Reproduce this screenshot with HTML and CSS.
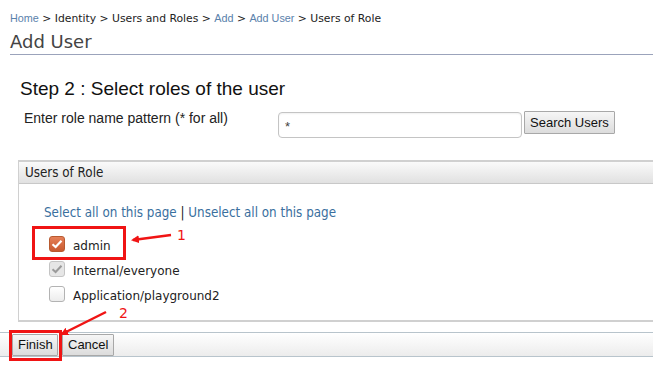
FILE: index.html
```html
<!DOCTYPE html>
<html lang="en">
<head>
  <meta charset="UTF-8" />
  <title>Add User</title>
  <link rel="stylesheet" href="styles.css">
</head>
<body>
  <div class="breadcrumb">
    <a href="#">Home</a> &gt; Identity &gt; Users and Roles &gt; <a href="#">Add</a> &gt; <a href="#">Add User</a> &gt; Users of Role
  </div>
  <h2 class="page-title">Add User</h2>

  <div class="content">
    <h3 class="step-title">Step 2 : Select roles of the user</h3>

    <div class="search-row">
      <label class="search-label">Enter role name pattern (* for all)</label>
      <input type="text" class="search-input" value="*" />
      <button class="btn search-btn">Search Users</button>
    </div>

    <div class="panel">
      <div class="panel-head">Users of Role</div>
      <div class="panel-body">
        <div class="select-links">
          <a href="#">Select all on this page</a> | <a href="#">Unselect all on this page</a>
        </div>
        <div class="role-list">
          <div class="role-item role-admin">
            <span class="box checked">
              <svg width="12" height="10" viewBox="0 0 12 10"><path d="M1.5 5.2 L4.6 8 L10.5 1.8" fill="none" stroke="#fff" stroke-width="2.2"/></svg>
            </span>
            <span class="role-name">admin</span>
          </div>
          <div class="role-item">
            <span class="box disabled">
              <svg width="12" height="10" viewBox="0 0 12 10"><path d="M1.5 5.2 L4.6 8 L10.5 1.8" fill="none" stroke="#9a9a9a" stroke-width="2"/></svg>
            </span>
            <span class="role-name">Internal/everyone</span>
          </div>
          <div class="role-item">
            <span class="box"></span>
            <span class="role-name">Application/playground2</span>
          </div>
        </div>
      </div>
    </div>
  </div>

  <div class="button-bar">
    <button class="btn finish-btn">Finish</button>
    <button class="btn">Cancel</button>
  </div>

  <!-- annotations -->
  <div class="mark mark-admin"></div>
  <div class="mark mark-finish"></div>
  <svg class="arrows" width="653" height="381" viewBox="0 0 653 381">
    <defs>
      <marker id="head" markerWidth="8" markerHeight="8" refX="6" refY="4" orient="auto" markerUnits="userSpaceOnUse">
        <path d="M0 0 L8 4 L0 8 Z" fill="#f01414"/>
      </marker>
    </defs>
    <line x1="171" y1="235" x2="133" y2="240" stroke="#f01414" stroke-width="2.5" marker-end="url(#head)"/>
    <line x1="106" y1="312" x2="62" y2="334" stroke="#f01414" stroke-width="2.5" marker-end="url(#head)"/>
    <text x="177" y="240" class="num">1</text>
    <text x="119" y="318" class="num">2</text>
  </svg>
</body>
</html>
```

FILE: styles.css
```css
body {
  margin: 0;
  font-family: "DejaVu Sans", sans-serif;
  background: #fff;
  color: #222;
  width: 653px;
  height: 381px;
  overflow: hidden;
  position: relative;
}

a {
  color: #3a6f9e;
  text-decoration: none;
}

.breadcrumb {
  padding: 11px 0 0 10px;
  font-size: 10.8px;
  line-height: 14px;
  height: 14px;
  color: #222;
}

.breadcrumb a {
  font-family: "Liberation Sans", Arial, sans-serif;
  font-size: 10.8px;
  color: #5a82ac;
}

.page-title {
  margin: 6px 0 0 10px;
  padding-bottom: 1px;
  font-size: 18px;
  line-height: 22px;
  font-weight: normal;
  color: #444;
  border-bottom: 1px solid #9ba3bb;
}

.content {
  padding: 0 0 0 18px;
}

.step-title {
  margin: 23px 0 0 2px;
  font-family: "Liberation Sans", Arial, sans-serif;
  font-size: 19px;
  line-height: 22px;
  font-weight: normal;
  color: #111;
}

.search-row {
  display: flex;
  align-items: flex-start;
  margin-top: 10px;
  height: 30px;
}

.search-label {
  width: 254px;
  padding: 0 0 0 6px;
  font-family: "Liberation Sans", Arial, sans-serif;
  font-size: 14px;
  line-height: 16px;
  color: #222;
}

.search-input {
  box-sizing: border-box;
  width: 244px;
  height: 26px;
  margin-top: 2px;
  padding: 3px 6px 0;
  border: 1px solid #c4c4c4;
  border-radius: 4px;
  font-family: "Liberation Sans", Arial, sans-serif;
  font-size: 13px;
  color: #444;
  box-shadow: inset 0 1px 2px rgba(0,0,0,0.06);
}

.btn {
  font-family: "Liberation Sans", Arial, sans-serif;
  font-size: 13px;
  color: #111;
  background: linear-gradient(#f6f6f6, #dcdcdc);
  border: 1px solid #a8a8a8;
  border-radius: 1px;
  padding: 0 5px;
  height: 22px;
  white-space: nowrap;
  cursor: pointer;
}

.search-btn {
  margin: 1px 0 0 2px;
  height: 23px;
}

.panel {
  margin-top: 20px;
  border-left: 1px solid #d0d0d0;
  border-top: 2px solid #d0d0d0;
  border-bottom: 2px solid #d0d0d0;
  height: 158px;
}

.panel-head {
  height: 21px;
  padding-left: 6px;
  font-family: "DejaVu Sans Condensed", "DejaVu Sans", sans-serif;
  font-size: 13.3px;
  line-height: 21px;
  color: #222;
  background: linear-gradient(#fafafa, #e1e1e1);
  border-bottom: 1px solid #c8c8c8;
}

.panel-body {
  padding: 22px 0 0 25px;
}

.select-links {
  font-family: "DejaVu Sans Condensed", "DejaVu Sans", sans-serif;
  font-size: 13.3px;
  line-height: 14px;
  color: #222;
}

.role-list {
  margin-top: 9px;
  display: flex;
  flex-direction: column;
  gap: 8px;
}

.role-item {
  display: flex;
  align-items: flex-end;
  font-size: 12px;
  height: 17px;
}

.role-admin {
  margin-top: 7px;
}

.box {
  box-sizing: border-box;
  width: 16px;
  height: 16px;
  margin-left: 5px;
  margin-right: 8px;
  border: 1px solid #b3b3b3;
  border-radius: 3px;
  background: linear-gradient(#fff, #ececec);
  display: flex;
  align-items: center;
  justify-content: center;
  align-self: flex-start;
}

.box.checked {
  border-color: #b85a30;
  background: linear-gradient(#e68058, #c85a30);
}

.box.disabled {
  border-color: #c4c4c4;
  background: #e6e6e6;
}

.role-name {
  line-height: 14px;
  color: #222;
}

.button-bar {
  margin-top: 10px;
  height: 23px;
  padding: 0 0 0 12px;
  border-top: 1px solid #b8c4cc;
  border-bottom: 1px solid #b8c4cc;
  background: linear-gradient(#ffffff, #ececec);
  display: flex;
  align-items: center;
  gap: 4px;
}

.finish-btn {
  width: 46px;
}

.mark {
  position: absolute;
  border: 3px solid #f01414;
}

.mark-admin {
  left: 32px;
  top: 226px;
  width: 88px;
  height: 28px;
}

.mark-finish {
  left: 9px;
  top: 330px;
  width: 47px;
  height: 25px;
}

.arrows {
  position: absolute;
  left: 0;
  top: 0;
}

.num {
  font-family: "DejaVu Sans", sans-serif;
  font-size: 14px;
  fill: #f01414;
}
```
